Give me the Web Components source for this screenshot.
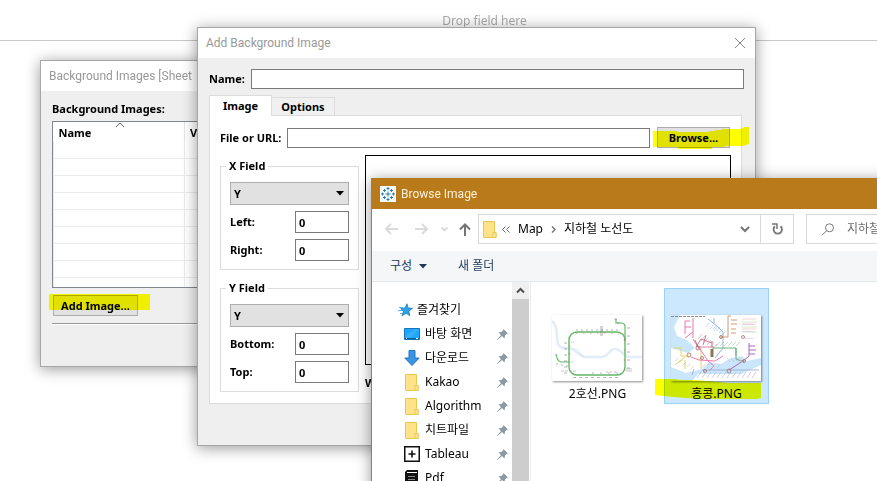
<!DOCTYPE html>
<html lang="ko">
<head>
<meta charset="utf-8">
<title>Add Background Image</title>
<style>
html,body{margin:0;height:100%}
body{background:#fff;font-family:"Noto Sans","Noto Sans CJK KR",sans-serif;font-size:12px;line-height:16px;color:#000}
</style>
</head>
<body>
<work-sheet></work-sheet>
<script>
const define = (name, html, setup) => {
  const t = document.createElement('template');
  t.innerHTML = '<style>*{box-sizing:border-box}button,input,select,a{font:inherit;color:inherit;text-decoration:none;margin:0;border-radius:0}svg{display:block}</style>' + html;
  customElements.define(name, class extends HTMLElement {
    constructor() {
      super();
      this.attachShadow({mode: 'open'}).append(t.content.cloneNode(true));
    }
    connectedCallback() { if (setup) setup(this, this.shadowRoot); }
  });
};

/* ---------- small parts ---------- */
define('highlight-mark', `
<style>
:host{position:absolute;left:var(--x,0);top:var(--y,0);mix-blend-mode:multiply;pointer-events:none}
</style><svg fill="#ff0"><path/></svg>`, (el, r) => {
  const s = r.querySelector('svg');
  s.setAttribute('width', el.getAttribute('w'));
  s.setAttribute('height', el.getAttribute('h'));
  r.querySelector('path').setAttribute('d', el.getAttribute('d'));
});

define('push-button', `
<style>
:host{display:block;position:relative}
button{display:block;width:100%;height:21px;padding:0 6px;border:1px solid #adadad;background:#e1e1e1;line-height:20px;font-weight:700;text-align:center;white-space:nowrap}
</style><button type="button"><slot></slot></button><slot name="mark"></slot>`);

define('text-field', `
<style>
:host{display:flex;align-items:center;font-weight:700}
label{flex:none;white-space:nowrap;margin-right:6px;line-height:18px}
input{flex:1;min-width:0;height:20px;border:1px solid #7a7a7a;background:#fff;padding:1px 3px 0;outline:0}
:host([compact]) label{flex:1;margin:0}
:host([compact]) input{flex:none;width:54px;height:22px}
</style><label for="i"></label><input id="i" type="text">`, (el, r) => {
  r.querySelector('label').textContent = el.getAttribute('label');
  r.querySelector('input').value = el.getAttribute('value') || '';
});

define('drop-down', `
<style>
:host{display:grid;font-weight:700}
select,svg{grid-area:1/1}
select{appearance:none;width:100%;height:23px;border:1px solid #adadad;background:#e1e1e1;padding:1px 3px 0;outline:0}
svg{justify-self:end;align-self:center;margin-right:5px;pointer-events:none}
</style><select><option>Y</option></select>
<svg width="8" height="5"><path d="M0 0h8L4 4.500z"/></svg>`, (el, r) => {
  r.querySelector('select').setAttribute('aria-label', el.getAttribute('label'));
});

define('field-group', `
<style>
:host{display:block}
fieldset{margin:0;min-width:0;border:1px solid #dcdcdc;padding:8px 9px}
legend{padding:0 3px;margin-left:-4px;height:16px;font-weight:700}
div{display:flex;flex-direction:column;gap:6px}
</style><fieldset><legend></legend><div><slot></slot></div></fieldset>`, (el, r) => {
  r.querySelector('legend').textContent = el.getAttribute('label');
});

/* ---------- window frame ---------- */
define('desk-window', `
<style>
:host{position:absolute;display:flex;flex-direction:column;border:1px solid #a6a6a6;background:#efefef;box-shadow:0 2px 14px rgba(0,0,0,.4)}
header{flex:none;display:flex;align-items:center;height:30px;padding:0 7px 0 8px;background:#fff;color:#999;white-space:nowrap}
h2{flex:1;margin:0;font:400 12px/16px Roboto,"Noto Sans CJK KR",sans-serif}
button{border:0;background:none;padding:0;width:14px;height:14px}
:host([active]){border-color:#b97a1b;background:#fff}
:host([active]) header{background:#b97a1b;color:#fff0d8}
:host([active]) button{display:none}
::slotted([slot=icon]){margin-right:5px}
</style>
<header><slot name="icon"></slot><h2></h2><button type="button" aria-label="Close"><svg width="12" height="12" viewBox="0 0 12 12"><path d="M1 1l10 10M11 1L1 11" stroke="#888" fill="none"/></svg></button></header>
<slot></slot>`, (el, r) => {
  r.querySelector('h2').textContent = el.getAttribute('heading');
});

/* ---------- background image list ---------- */
define('image-list', `
<style>
:host{display:block;padding:10px 11px 41px;font-weight:700;font-size:11px}
p{margin:0 0 4px;white-space:nowrap;line-height:16px}
.box{height:167px;overflow:hidden;border:1px solid #82868f;background:#fff}
table{width:100%;border-collapse:collapse;table-layout:fixed}
col:first-child{width:131px}
th{position:relative;height:19px;padding:3px 5px 0;text-align:left;border-right:1px solid #e5e5e5;line-height:16px}
th svg{position:absolute;left:61px;top:0}
td{height:17px;padding:0;border:1px solid #ebebeb;border-top:0}
push-button{width:85px;margin:7px 0 7px 1px}
hr{margin:0;border:0;border-top:1px solid #999;border-bottom:1px solid #fff}
</style>
<p>Background Images:</p>
<div class="box"><table><colgroup><col><col></colgroup>
<thead><tr><th>Name<svg width="10" height="6" viewBox="0 0 10 6"><path d="M1 5l4-4 4 4" stroke="#666" fill="none"/></svg></th><th>View</th></tr></thead><tbody></tbody></table></div>
<push-button>Add Image...<highlight-mark slot="mark" style="--x:-4px;--y:-1px" w="101" h="16" d="M0 0h101v16H0z"></highlight-mark></push-button>
<hr>`, (el, r) => {
  r.querySelector('tbody').innerHTML = '<tr><td></td><td></td></tr>'.repeat(9);
});

/* ---------- add image form ---------- */
define('image-form', `
<style>
:host{display:block;padding:11px 11px 41px;font-weight:700;font-size:11px}
.tabs{display:flex;align-items:flex-end;height:21px;margin:6px 0 -1px;position:relative}
.tabs button{border:1px solid #dcdcdc;width:63px;height:19px;padding:0;background:#f0f0f0;line-height:18px;border-left:0}
.tabs button[aria-selected=true]{height:21px;background:#fff;border-left:1px solid #dcdcdc;border-bottom:0;line-height:20px}
.panel{margin-right:2px;border:1px solid #dcdcdc;background:#fff;padding:11px 10px}
.file{display:flex;gap:7px;margin-bottom:7px;padding-right:1px}
.file text-field{flex:1}
.file push-button{width:73px}
.cols{display:flex;gap:6px}
.left{flex:none;width:139px;display:flex;flex-direction:column;gap:10px;padding-top:3px}
.right{flex:1;display:flex;flex-direction:column;gap:9px}
.preview{flex:1;border:1px solid #000}
.wash{display:flex;gap:8px;height:18px;align-items:center}
.wash input{flex:1;height:16px}
</style>
<text-field label="Name:"></text-field>
<div class="tabs" role="tablist"><button type="button" role="tab" aria-selected="true">Image</button><button type="button" role="tab" aria-selected="false">Options</button></div>
<div class="panel" role="tabpanel">
<div class="file"><text-field label="File or URL:"></text-field><push-button>Browse...<highlight-mark slot="mark" style="--x:-4px;--y:0px" w="96" h="22" d="M0 4h24v1h32v-1h6v-1h7v-1h20v-1h2v-1h5v17l-3 1-3 1h-18v1h-13v2h-34v-2h-25z"></highlight-mark></push-button></div>
<div class="cols">
<div class="left">
<field-group label="X Field"><drop-down label="X Field"></drop-down><text-field compact label="Left:" value="0"></text-field><text-field compact label="Right:" value="0"></text-field></field-group>
<field-group label="Y Field"><drop-down label="Y Field"></drop-down><text-field compact label="Bottom:" value="0"></text-field><text-field compact label="Top:" value="0"></text-field></field-group>
</div>
<div class="right"><div class="preview"></div><div class="wash"><label for="w">Washout:</label><input id="w" type="range"></div></div>
</div></div>`);

/* ---------- file browser ---------- */
const folder = `<svg width="14" height="17" viewBox="0 0 14 17"><path d="M.5.5h11v11h1.500v5H.5z" fill="#ffe28a" stroke="#e9c84f"/><path d="M11.500 11.500h-1.500v5h3v-5z" fill="#ffe79b" stroke="#e9c84f"/></svg>`;
const glyphs = {
  folder,
  star: `<svg width="15" height="14" viewBox="0 0 15 14"><path d="M9 .8l1 4.200 4.500.3-3.700 2.700 1 4.700-3.600-2.500-4.200 2.500L5.500 8.500 2.800 5.500 7 5z" fill="#2ba3ee" stroke="#1878b9" stroke-width=".8"/><path d="M1 4.500h4M0 7.500h4M2 10.500h2" stroke="#58b7ee"/></svg>`,
  desktop: `<svg width="16" height="12" viewBox="0 0 16 12"><path d="M.5.5h15v11H.5z" fill="#1ea5fc" stroke="#1475ba"/><path d="M11 1h4L7 10H1V8z" fill="#42b5ff" opacity=".6"/><path d="M1 10.500h14" stroke="#0b5e99"/><path d="M2 10.500h1M12 10.500h2" stroke="#fff"/></svg>`,
  down: `<svg width="16" height="16" viewBox="0 0 16 16"><path d="M5 .5h6V8h4.200L8 15.500.8 8H5z" fill="#3a95e5" stroke="#2474bd"/></svg>`,
  tableau: `<svg width="16" height="16" viewBox="0 0 16 16"><path d="M.75.75h14.500v14.500H.75z" fill="#fff" stroke="#111" stroke-width="1.500"/><path d="M8 4.500v7M4.500 8h7" stroke="#111" stroke-width="1.600"/></svg>`,
  pdf: `<svg width="14" height="16" viewBox="0 0 14 16"><path d="M2 0h11v14H2L0 16V2z" fill="#111"/><path d="M2 2.500h10" stroke="#fff"/><path d="M3 6.500h7M3 9.500h7" stroke="#888"/><path d="M2 14.500h11" stroke="#aaa"/></svg>`
};

define('side-link', `
<style>
:host{display:block}
a{display:flex;align-items:center;height:24px;padding:0 4px 0 32px;white-space:nowrap}
:host([root]) a{padding-left:25px}
i{flex:none;width:16px;margin-right:5px;display:grid;place-items:center}
:host([root]) i{margin-right:4px}
span{flex:1}
:host([root]) .pin{display:none}
</style><a href="#"><i></i><span><slot></slot></span><svg class="pin" width="11" height="11" viewBox="0 0 11 11"><path d="M6.500 0L11 4.500 9.500 5 8 6.500 7.500 9.500 5 7 .5 10.800 0 10.500 4 6 1.500 3.500 4.500 3 6 1.500z" fill="#8a98a3"/></svg></a>`, (el, r) => {
  r.querySelector('i').innerHTML = glyphs[el.getAttribute('icon')];
});

define('side-bar', `
<style>
:host{flex:none;display:flex;width:159px;border-right:1px solid #ececec;overflow:hidden}
nav{flex:1;padding-top:16px}
.scroll{flex:none;width:17px;margin-right:1px;display:flex;flex-direction:column;background:#cdcdcd}
.scroll button{flex:none;height:17px;border:0;padding:0;background:#f0f0f0;display:grid;place-items:center}
</style>
<nav aria-label="즐겨찾기">
<side-link root icon="star">즐겨찾기</side-link>
<side-link icon="desktop">바탕 화면</side-link>
<side-link icon="down">다운로드</side-link>
<side-link icon="folder">Kakao</side-link>
<side-link icon="folder">Algorithm</side-link>
<side-link icon="folder">치트파일</side-link>
<side-link icon="tableau">Tableau</side-link>
<side-link icon="pdf">Pdf</side-link>
</nav>
<div class="scroll"><button type="button" aria-label="Scroll up"><svg width="9" height="7" viewBox="0 0 9 7"><path d="M1 5.500l3.500-3.500L8 5.500" fill="none" stroke="#505050" stroke-width="2"/></svg></button></div>`);

define('path-bar', `
<style>
:host{flex:none;display:flex;align-items:center;height:40px;padding:0 0 0 13px;margin-bottom:2px}
.nav{flex:none;display:flex;align-items:center;width:93px}
button{border:0;background:none;padding:0}
.fwd{margin-left:17px}
.recent{margin-left:13px}
.up{margin-left:11px}
.addr{flex:none;width:316px;height:30px;border:1px solid #d9d9d9;display:flex;align-items:center;margin-right:12px;white-space:nowrap}
.addr>svg,.addr>button>svg{flex:none}
.dir{margin:0 5px 0 4px}
.crumb{margin:0 8px}
.more{margin-left:auto;margin-right:10px}
.reload{align-self:stretch;width:33px;border-left:1px solid #d9d9d9;display:grid;place-items:center}
.search{flex:1;height:30px;border:1px solid #d9d9d9;display:flex;align-items:center;padding-left:14px}
.search input{flex:1;min-width:0;margin-left:12px;border:0;outline:0;padding:0;background:none}
.search input::placeholder{color:#6d6d6d;opacity:1}
</style>
<div class="nav">
<button type="button" aria-label="Back"><svg width="13" height="12" viewBox="0 0 13 12"><path d="M13 6H1.500M6 1L1 6l5 5" fill="none" stroke="#dadada" stroke-width="2"/></svg></button>
<button type="button" class="fwd" aria-label="Forward"><svg width="13" height="12" viewBox="0 0 13 12"><path d="M0 6h11.500M7 1l5 5-5 5" fill="none" stroke="#dadada" stroke-width="2"/></svg></button>
<button type="button" class="recent" aria-label="Recent"><svg width="7" height="5" viewBox="0 0 7 5"><path d="M.5.5l3 3 3-3" fill="none" stroke="#d0d0d0" stroke-width="1.500"/></svg></button>
<button type="button" class="up" aria-label="Up"><svg width="12" height="13" viewBox="0 0 12 13"><path d="M6 13V2M1 6.500L6 1.500l5 5" fill="none" stroke="#757575" stroke-width="2"/></svg></button>
</div>
<div class="addr"><svg class="dir" width="14" height="17" viewBox="0 0 14 17"><path d="M.5.5h11v11h1.500v5H.5z" fill="#ffe28a" stroke="#e9c84f"/><path d="M11.500 11.500h-1.500v5h3v-5z" fill="#ffe79b" stroke="#e9c84f"/></svg>
<svg width="8" height="7" viewBox="0 0 8 7"><path d="M3.500.5l-3 3 3 3M7.500.5l-3 3 3 3" fill="none" stroke="#666"/></svg>
<button type="button" class="crumb">Map</button>
<svg width="5" height="7" viewBox="0 0 5 7"><path d="M1 .5l3 3-3 3" fill="none" stroke="#777" stroke-width="1.500"/></svg>
<button type="button" class="crumb">지하철 노선도</button>
<button type="button" class="more" aria-label="Locations"><svg width="10" height="7" viewBox="0 0 10 7"><path d="M1 1l4 4 4-4" fill="none" stroke="#757575" stroke-width="2"/></svg></button>
<button type="button" class="reload" aria-label="Refresh"><svg width="11" height="12" viewBox="0 0 11 12"><path d="M8.500 3.200A4.200 4.200 0 1 1 3 3.200" fill="none" stroke="#757575" stroke-width="1.800"/><path d="M0 1h5v5" fill="none" stroke="#757575" stroke-width="1.500"/></svg></button></div>
<div class="search"><svg width="14" height="13" viewBox="0 0 14 13"><circle cx="8.500" cy="4.800" r="4" fill="none" stroke="#777"/><path d="M5.500 7.800L1 12.300" stroke="#777"/></svg><input type="search" aria-label="Search" placeholder="지하철 노선도 검색"></div>`);

define('tool-strip', `
<style>
:host{flex:none;display:flex;align-items:center;height:31px;padding-left:18px;gap:31px;background:#f4f6f8;border-bottom:1px solid #e5e8eb;color:#1e395b}
button{display:flex;align-items:center;gap:7px;border:0;background:none;padding:0;white-space:nowrap}
</style><button type="button">구성<svg width="8" height="5"><path d="M0 0h8L4 4.500z" fill="#1e395b"/></svg></button><button type="button">새 폴더</button>`);

const ticks = (x, y, dx, dy, n, tx, ty, c) => {
  let d = '';
  for (let i = 0; i < n; i++) d += `M${x + dx * i} ${y + dy * i}l${tx} ${ty}`;
  return `<path d="${d}" stroke="${c}" fill="none" stroke-width=".7" opacity=".8"/>`;
};
const maps = {
  loop: `<rect width="90" height="66" fill="#fff"/>
<path d="M0 6c6 4 4 14 6 23 3 6 8 3 14 5 6 3 8 8 14 8h16c6 0 7-8 13-8s9 8 15 8h12" fill="none" stroke="#e3ecf9" stroke-width="2.500"/>
<path d="M18 34h6c4 2 5 7 9 8" fill="none" stroke="#d9e6f7"/>
<rect x="17" y="17" width="56" height="43" rx="8" fill="none" stroke="#62b866" stroke-width="1.400"/>
<path d="M73 26V11q0-2-3-3h-6V4M17 47H9q-4-1-5-8" fill="none" stroke="#62b866" stroke-width="1.200"/>` +
    ticks(24, 15, 5, 0, 9, 2, 0, '#777') + ticks(24, 18.500, 7, 0, 7, 1.500, 0, '#f08b55') + ticks(48, 12, 0, 2, 5, 3, 0, '#667') +
    ticks(12, 28, 0, 6, 6, 3, 0, '#777') + ticks(17, 31, 0, 8, 3, 1.500, 0, '#d66') + ticks(75, 13, 0, 8, 6, 3, 0, '#777') +
    ticks(71.500, 25, 0, 10, 4, 2, 0, '#d66') + ticks(21, 62.500, 6, 0, 8, 3, 0, '#777') + ticks(40, 58, 8, 0, 4, 2, 0, '#67c') + ticks(54, 57, 4, 0, 3, 2, 0, '#d66') +
    ticks(19, 27, 0, 20, 2, 3, 0, '#9bd') + ticks(4, 49, 5, 1, 3, 2, 0, '#777') + ticks(9, 56, 4, 0, 4, 3, 0, '#999') + ticks(62, 4, 3, 4, 2, 3, 0, '#777') + ticks(74, 54, 0, 2, 2, 6, 0, '#999'),
  city: `<rect width="90" height="66" fill="#fff"/>
<path d="M0 0h9L3 12l3 9 10 4 8 8-7 5-17-5zM0 52l15 6 16-4 7-7 12 2 10-6 11-2 5 5 14-3v7l-20 9H27l-6 7H0z" fill="#c9e6fa"/>
<path d="M19 6h-5v4M22 3v20M14 10v9M14 12h6M22 17l-8 6M22 24l5 8h16" stroke="#eb78aa" fill="none"/>
<path d="M25 32l5-8 11 4M28 34l-4-9M32 30l3-10M41 32v-6" stroke="#bd5a75" fill="none" stroke-width=".8"/>
<path d="M37 4l9 7 6 6v16l-8 10M43 8V3M52 17l-5-5" stroke="#8db6ec" fill="none"/>
<path d="M60 1h-3v21H49M60 5h6M60 9h6M60 14h5M60 18h5" stroke="#d29a72" fill="none"/>
<path d="M41 33h24v11l8 3M65 33v8" stroke="#68b377" fill="none"/>
<path d="M78 28v13l-6 5-14 9M78 31h6M78 35h7M78 39h6" stroke="#a964c2" fill="none"/>
<path d="M2 33h8v8h8M4 50l10-8M14 45v9M30 33v21" stroke="#e4d366" fill="none"/>
<path d="M20 42l8 3 16 1 8-5M29 34l8 12 6 5-5 5" stroke="#f07bad" fill="none"/>
<path d="M23 54l-2 6M31 55h57" stroke="#9ba0d8" fill="none" stroke-width=".8"/>
<path d="M41 34v8" stroke="#8d7555" stroke-width="3"/>
<g fill="none" stroke="#a36d60" stroke-width=".8"><circle cx="27" cy="33" r="2"/><circle cx="18" cy="40" r="2"/><circle cx="31" cy="43" r="1.500"/><circle cx="34" cy="56" r="1.500"/><circle cx="58" cy="56" r="2"/><circle cx="73" cy="46" r="1.500"/><circle cx="72" cy="22" r="1.500"/><circle cx="50" cy="22" r="1.500"/></g>
<path d="M0 1.500h34" stroke="#777" stroke-width=".8" stroke-dasharray="3 1"/>` +
    ticks(27, 24, 3, 2, 6, 4, -5, '#d08e9c') + ticks(42, 14, 3, 2, 4, 4, -4, '#a5bce6') + ticks(45, 31, 4, 0, 6, 4, -4, '#92c999') + ticks(26, 63, 5, 0, 12, 4, -6, '#aca6c9') + ticks(38, 8, 4, 2, 3, -3, 4, '#9db8e2') + ticks(56, 43, 4, 0, 4, 3, 4, '#cfb5d3') +
    ticks(71, 4, 0, 5, 3, 14, 0, '#e8b3b3') + ticks(71, 7, 0, 5, 3, 15, 0, '#bfd79b') + ticks(71, 9.500, 0, 7, 3, 12, 0, '#d3bbe5') + ticks(4, 46, 4, 2, 5, 3, -3, '#d1bb8f') + ticks(34, 49, 5, 0, 4, -3, 4, '#cbb')
};

define('file-tile', `
<style>
:host{display:block;position:relative}
button{display:flex;flex-direction:column;align-items:center;gap:5px;width:105px;height:116px;padding:26px 2px 0 0;border:1px solid transparent;background:none;white-space:nowrap}
:host([selected]) button{background:#cce8ff;border-color:#99d1ff}
span{padding-left:2px}
svg{filter:drop-shadow(1px 1px 1px rgba(0,0,0,.45))}
</style><button type="button"><svg width="90" height="66" viewBox="0 0 90 66"></svg><span><slot></slot></span></button><slot name="mark"></slot>`, (el, r) => {
  r.querySelector('svg').innerHTML = maps[el.getAttribute('map')];
});

define('file-browser', `
<style>
:host{flex:1;min-height:0;display:flex;flex-direction:column}
.main{flex:1;min-height:0;display:flex;overflow:hidden}
.files{flex:1;display:flex;align-items:flex-start;gap:14px;padding:6px 14px}
</style>
<path-bar></path-bar><tool-strip></tool-strip>
<div class="main"><side-bar></side-bar>
<div class="files"><file-tile map="loop">2호선.PNG</file-tile><file-tile map="city" selected>홍콩.PNG<highlight-mark slot="mark" style="--x:-9px;--y:91px" w="106" h="20" d="M0 0h20l5 1h14l14 1 19 2h34v15l-4 1h-57l-27-2-18-2z"></highlight-mark></file-tile></div></div>`);

define('work-sheet', `
<style>
:host{display:block;position:relative;min-height:100%;overflow:hidden}
.drop{height:41px;border-bottom:1px solid #c8c8c8;padding:13px 0 0 92px;text-align:center;color:#aaa}
.list{left:40px;top:60px;right:480px}
.form{left:197px;top:27px;right:121px}
.browse{left:371px;top:178px;right:-140px;bottom:-20px}
</style>
<div class="drop">Drop field here</div>
<desk-window class="list" heading="Background Images [Sheet"><image-list></image-list></desk-window>
<desk-window class="form" heading="Add Background Image"><image-form></image-form></desk-window>
<desk-window class="browse" heading="Browse Image" active>
<svg slot="icon" width="16" height="16" viewBox="0 0 16 16"><rect width="16" height="16" fill="#f6f9fb"/><path d="M8 5.500v5M5.500 8h5M8 1v3M6.500 2.500h3M8 12v3M6.500 13.500h3M1 8h3M2.500 6.500v3M12 8h3M13.500 6.500v3M4.500 3v3M3 4.500h3M11.500 3v3M10 4.500h3M4.500 10v3M3 11.500h3M11.500 10v3M10 11.500h3" stroke="#2f7fae" fill="none"/></svg>
<file-browser></file-browser></desk-window>`);
</script>
</body>
</html>
